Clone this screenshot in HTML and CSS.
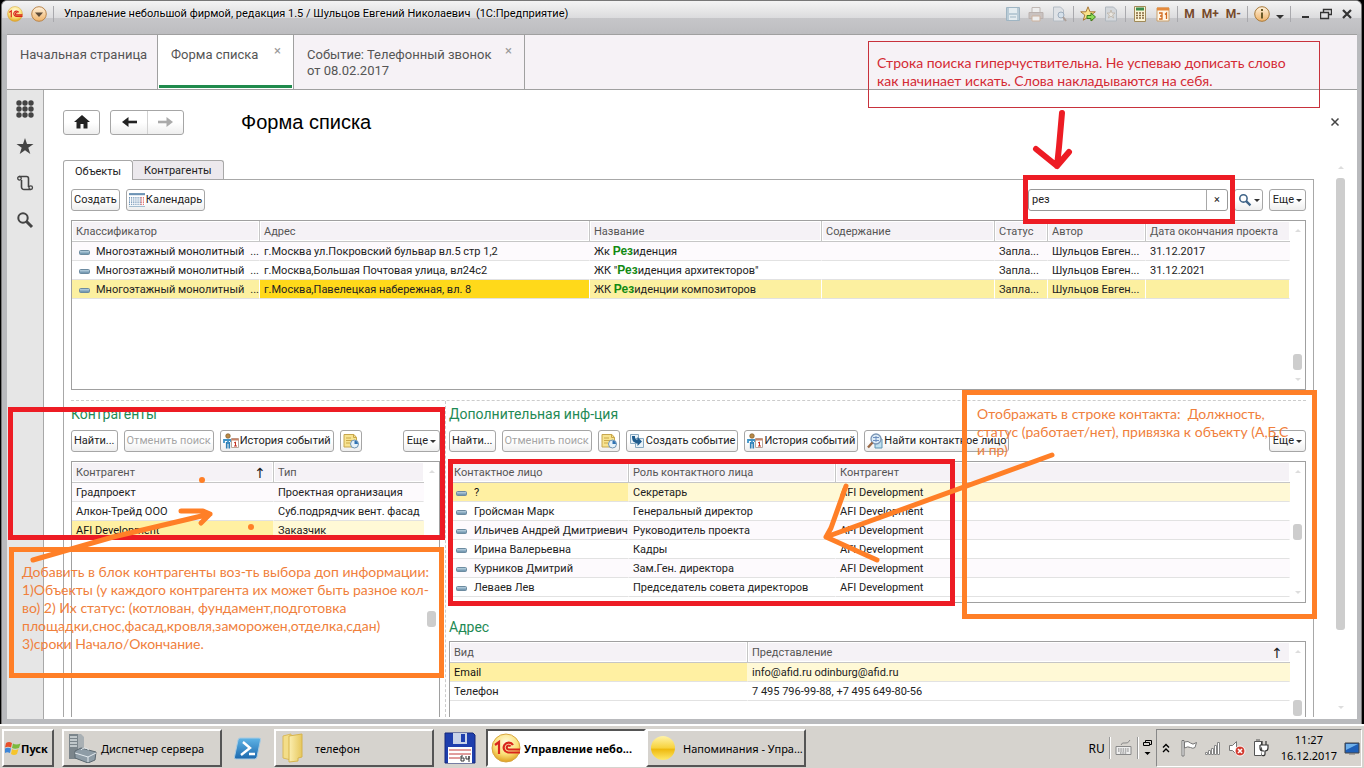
FILE: index.html
```html
<!DOCTYPE html>
<html lang="ru">
<head>
<meta charset="utf-8">
<title>Управление небольшой фирмой</title>
<link rel="stylesheet" href="styles.css">
</head>
<body>
<svg class="sprite" aria-hidden="true">
  <defs>
    <radialGradient id="gold" cx=".5" cy=".3" r=".7"><stop offset="0" stop-color="#fffbe0"/><stop offset=".6" stop-color="#fbe27a"/><stop offset="1" stop-color="#e0a020"/></radialGradient>
    <linearGradient id="ball" x1="0" y1="0" x2="0" y2="1"><stop offset="0" stop-color="#fff3a8"/><stop offset=".5" stop-color="#f7d23c"/><stop offset=".55" stop-color="#eeb90d"/><stop offset="1" stop-color="#ffe96a"/></linearGradient>
    <linearGradient id="steel" x1="0" y1="0" x2="0" y2="1"><stop offset="0" stop-color="#c5dbe8"/><stop offset="1" stop-color="#5f87a3"/></linearGradient>
    <linearGradient id="peach" x1="0" y1="0" x2="0" y2="1"><stop offset="0" stop-color="#fff2dc"/><stop offset="1" stop-color="#efb268"/></linearGradient>
    <linearGradient id="blue" x1="0" y1="0" x2="0" y2="1"><stop offset="0" stop-color="#5fb4e6"/><stop offset="1" stop-color="#1c68ad"/></linearGradient>
    <linearGradient id="folder" x1="0" y1="0" x2="1" y2="0"><stop offset="0" stop-color="#fbeeb0"/><stop offset="1" stop-color="#e6c75c"/></linearGradient>
  </defs>
  <symbol id="i-1c" viewBox="0 0 30 30"><circle cx="15" cy="15" r="14" fill="url(#gold)" stroke="#d8a640"/><path d="M4 12l4-3v12M22 12a5 5 0 1 0-5 7.500h12M19.500 13.500a2 2 0 1 0-2 3H29" fill="none" stroke="#d8261c" stroke-width="2.200"/></symbol>
  <symbol id="i-dash" viewBox="0 0 11 5"><rect x=".5" y=".5" width="10" height="4" rx="1" fill="url(#steel)" stroke="#6c8ba0"/></symbol>
  <symbol id="i-cal" viewBox="0 0 15 13"><path fill="#fff" d="M0 0h15v13H0z"/><path d="M0 1h15" stroke="#6d93b5" stroke-width="2"/><path d="M0 4.5h11M0 6.500h11M0 8.500h11M0 10.500h11" stroke="#3f6f9c" stroke-dasharray="1 1"/><path d="M11 4.500h4M11 6.500h4M11 8.500h4M11 10.500h4" stroke="#d84040" stroke-dasharray="1 1"/><path d="M0 12.500h15" stroke="#9db8cc"/></symbol>
  <symbol id="i-hist" viewBox="0 0 16 16"><circle cx="5" cy="3" r="2.300" fill="#b98a48" stroke="#76501e" stroke-width=".6"/><path d="M1 10V7h7v2M5 7v4" stroke="#3f93c8" stroke-width="1.800" fill="none"/><path d="M3.700 9v6.500M6.300 9v6.500" stroke="#2e7fb5" stroke-width="1.600"/><path d="M8.500 5.500h7v9h-7z" fill="#fff" stroke="#b8a79c"/><path d="M8.500 6.500h7" stroke="#c98468" stroke-width="2"/><path d="M11 10l1.500-1v4M11 13h3" stroke="#c33020" fill="none"/></symbol>
  <symbol id="i-note" viewBox="0 0 16 16"><path d="M1 1.500h10l2.500 3V14H1z" fill="#f7e391" stroke="#c6a64e"/><path d="M10.500 1.500v3h3M3 5h5M3 7.500h6M3 10h4" stroke="#cba848" fill="none"/><circle cx="11.500" cy="11" r="4" fill="#e6f2fa" stroke="#6f94b3"/><path d="M11.500 8v3h3.500a4 4 0 0 0-3.500-3.500z" fill="#2f72b3"/></symbol>
  <symbol id="i-event" viewBox="0 0 16 16"><path d="M1.500 1.500h8v9h-8zM6.500 5.500h8v9h-8z" fill="#e9f2f8" stroke="#87a8c0"/><path d="M3 3h3c0 3 .5 3.500 2.500 3.500V4L13 8.500 8.500 13v-3C4.500 10 3 8 3 3z" fill="#1f5c8e"/></symbol>
  <symbol id="i-find" viewBox="0 0 16 16"><path d="M8 6h7v9H8z" fill="#bfe0ee" stroke="#5f95b3"/><circle cx="9" cy="6" r="5" fill="#dcebf6" stroke="#7a95b5" stroke-width="1.300"/><path d="M6 4.500h6M6 7.500h6M9 3v6" stroke="#6c8fc0"/><path d="M5.500 9.500L1 14.500" stroke="#9a6a48" stroke-width="2.400"/></symbol>
  <symbol id="i-lens" viewBox="0 0 18 18"><circle cx="7" cy="7" r="4.700" fill="none" stroke="currentColor" stroke-width="2"/><path d="M10.500 10.500l5.500 5.500" stroke="currentColor" stroke-width="3"/></symbol>
  <symbol id="i-disk" viewBox="0 0 16 16"><path d="M1.500 1.500h13v13h-13z" fill="#b9cbd6" stroke="#9fb5c3"/><path d="M4 2h8v5H4zM4 9h8v5H4z" fill="#e4ecf0"/><path d="M5 11h6" stroke="#9fb5c3"/></symbol>
  <symbol id="i-print" viewBox="0 0 16 16"><path d="M4 1.500h8v5H4z" fill="#eee" stroke="#c0b8b4"/><path d="M1 6.500h14v6H1z" fill="#c9c2c0" stroke="#bab1ae"/><path d="M4 10h8v5H4z" fill="#eee" stroke="#ccb29f"/></symbol>
  <symbol id="i-preview" viewBox="0 0 16 16"><path d="M2.500 1h7l3 3v11h-10z" fill="#dfe2e6" stroke="#b4bcc4"/><circle cx="10" cy="9" r="3" fill="#d5e0ea" stroke="#9dacbc"/><path d="M12 11l3 4" stroke="#ada099" stroke-width="2"/></symbol>
  <symbol id="i-star" viewBox="0 0 16 16"><path d="M8 .8l2 5h5.300L11.200 9l1.500 5.200L8 11.300 3.300 14.200 4.800 9 .7 5.800H6z" fill="#fbe28a" stroke="#a8783a"/><path d="M7 9.500h4V7l4.500 4L11 15v-2.500H7z" fill="#8fdc55" stroke="#3c7d1f"/></symbol>
  <symbol id="i-starpage" viewBox="0 0 16 16"><path d="M2.500 1h8l3 3v11h-11z" fill="#d4d8dc" stroke="#b0b7be"/><path d="M8 4l1 3h3L9.600 9l1 3L8 10.200 5.400 12l1-3L4 7h3z" fill="#e9e6e0" stroke="#bdb4a8" stroke-width=".8"/></symbol>
  <symbol id="i-calc" viewBox="0 0 14 16"><path d="M1.500.5h11v15h-11z" fill="#fbf3d4" stroke="#a08a58"/><path d="M3 3h8" stroke="#3c8c4c" stroke-width="3"/><path d="M3 7h8M3 9.500h8M3 12h8" stroke="#87693f" stroke-width="1.500" stroke-dasharray="2 1"/></symbol>
  <symbol id="i-day" viewBox="0 0 14 16"><path d="M1 2h12v13H1z" fill="#fff6e6" stroke="#caa06c"/><path d="M1 3h12" stroke="#e58a3c" stroke-width="3"/><path d="M3 7h3v3H4h2v3H3M9 8.500L10.500 7v6" stroke="#d2691e" fill="none" stroke-width="1.300"/></symbol>
</svg>

<div class="window">
  <header class="titlebar">
    <button class="plain" aria-label="Главное меню"><svg class="ic16"><use href="#i-1c"/></svg></button>
    <button class="plain drop" aria-label="Меню"><svg class="ic16" viewBox="0 0 16 16"><circle cx="8" cy="8" r="7.300" fill="url(#peach)" stroke="#b9854c"/><path d="M4 6.500h8L8 11z" fill="#5c4a38"/></svg></button>
    <span class="vsep"></span>
    <h1 class="apptitle">Управление небольшой фирмой, редакция 1.5 / Шульцов Евгений Николаевич&nbsp; (1С:Предприятие)</h1>
    <div class="tools">
      <button class="plain" aria-label="Сохранить"><svg class="ic16"><use href="#i-disk"/></svg></button>
      <button class="plain" aria-label="Печать"><svg class="ic16"><use href="#i-print"/></svg></button>
      <button class="plain" aria-label="Просмотр"><svg class="ic16"><use href="#i-preview"/></svg></button>
      <span class="vsep"></span>
      <button class="plain" aria-label="В избранное"><svg class="ic16"><use href="#i-star"/></svg></button>
      <button class="plain" aria-label="Избранное"><svg class="ic16"><use href="#i-starpage"/></svg></button>
      <span class="vsep"></span>
      <button class="plain" aria-label="Калькулятор"><svg class="ic16"><use href="#i-calc"/></svg></button>
      <button class="plain" aria-label="Календарь"><svg class="ic16"><use href="#i-day"/></svg></button>
      <span class="vsep"></span>
      <button class="plain mem">M</button>
      <button class="plain mem">M+</button>
      <button class="plain mem">M-</button>
      <span class="vsep"></span>
      <button class="plain info" aria-label="Информация"><svg class="ic16" viewBox="0 0 16 16"><circle cx="8" cy="8" r="7.300" fill="url(#peach)" stroke="#a87a3a"/><path d="M8 3v2M8 6.500v6" stroke="#6a5a28" stroke-width="2"/></svg><svg class="car" viewBox="0 0 8 4"><path d="M0 0h8L4 4z" fill="#333"/></svg></button>
      <span class="vsep"></span>
      <button class="plain wctl" aria-label="Свернуть"><svg class="ic12" viewBox="0 0 12 12"><path d="M3 9h7" stroke="#333" stroke-width="2"/></svg></button>
      <button class="plain wctl" aria-label="Восстановить"><svg class="ic12" viewBox="0 0 12 12"><path d="M3.500 4V1.500h8v5H9M.5 4.500h8v6h-8z" fill="none" stroke="#333" stroke-width="1.400"/></svg></button>
      <button class="plain wctl" aria-label="Закрыть"><svg class="ic12" viewBox="0 0 12 12"><path d="M2 2l8 8M10 2l-8 8" stroke="#333" stroke-width="2.200"/></svg></button>
    </div>
  </header>

  <nav class="tabs">
    <a class="tab home" href="#">Начальная страница</a>
    <a class="tab form active" href="#"><span>Форма списка</span><i>×</i></a>
    <a class="tab event" href="#"><span>Событие: Телефонный звонок<br>от 08.02.2017</span><i>×</i></a>
  </nav>

  <div class="body">
    <aside class="sidebar">
      <button class="plain" aria-label="Разделы"><svg class="ic18" viewBox="0 0 18 18" fill="#444"><circle cx="3" cy="3" r="2.700"/><circle cx="9" cy="3" r="2.700"/><circle cx="15" cy="3" r="2.700"/><circle cx="3" cy="9" r="2.700"/><circle cx="9" cy="9" r="2.700"/><circle cx="15" cy="9" r="2.700"/><circle cx="3" cy="15" r="2.700"/><circle cx="9" cy="15" r="2.700"/><circle cx="15" cy="15" r="2.700"/></svg></button>
      <button class="plain" aria-label="Избранное"><svg class="ic18" viewBox="0 0 18 18"><path d="M9 1l2 6h6.500l-5.200 3.800L14.300 17 9 13.200 3.700 17l2-6.200L.5 7H7z" fill="#444"/></svg></button>
      <button class="plain" aria-label="История"><svg class="ic18" viewBox="0 0 18 18"><path d="M3 2.500h7.500a2 2 0 0 1 2 2V13M5.500 6V13a2.500 2.500 0 0 0 2.500 2.500h6.500" fill="none" stroke="#444" stroke-width="1.600"/><circle cx="3.500" cy="4.300" r="1.800" fill="none" stroke="#444" stroke-width="1.300"/><circle cx="14.700" cy="13.700" r="1.800" fill="none" stroke="#444" stroke-width="1.300"/></svg></button>
      <button class="plain" aria-label="Поиск"><svg class="ic18"><use href="#i-lens"/></svg></button>
    </aside>

    <main class="content">
      <div class="formhead">
        <button class="btn nav" aria-label="Домой"><svg class="ic18" viewBox="0 0 18 18"><path d="M9 2l8 7h-2.500v6.500h-4V11h-3v4.500h-4V9H1z" fill="#222"/></svg></button>
        <div class="navpair">
          <button aria-label="Назад"><svg class="ic18" viewBox="0 0 18 18"><path d="M17 9H6" stroke="#222" stroke-width="2.600"/><path d="M2 9l6.500-5v10z" fill="#222"/></svg></button>
          <button aria-label="Вперед"><svg class="ic18" viewBox="0 0 18 18"><path d="M1 9h11" stroke="#aaa" stroke-width="2.600"/><path d="M16 9L9.500 4v10z" fill="#aaa"/></svg></button>
        </div>
        <h2>Форма списка</h2>
        <button class="plain closeform" aria-label="Закрыть форму"><svg class="ic12" viewBox="0 0 12 12"><path d="M2.500 2.500l7 7M9.500 2.500l-7 7" stroke="#444" stroke-width="1.500"/></svg></button>
      </div>

      <div class="scrollarea">
        <div class="formcol">
          <div class="ptabs" role="tablist">
            <button class="ptab on" role="tab">Объекты</button><button class="ptab" role="tab">Контрагенты</button>
          </div>
          <section class="panel">
            <div class="bar">
              <button class="btn">Создать</button>
              <button class="btn"><svg class="ic16"><use href="#i-cal"/></svg>Календарь</button>
              <div class="search"><input type="text" value="рез" aria-label="Поиск"><button aria-label="Очистить">×</button></div>
              <button class="btn lens" aria-label="Найти"><svg class="ic14"><use href="#i-lens"/></svg><b class="caret"></b></button>
              <button class="btn more">Еще<b class="caret"></b></button>
            </div>

            <div class="grid objects">
              <table>
                <colgroup><col class="w187"><col class="w330"><col class="w232"><col class="w173"><col class="w53"><col class="w98"><col></colgroup>
                <thead><tr><th>Классификатор</th><th>Адрес</th><th>Название</th><th>Содержание</th><th>Статус</th><th>Автор</th><th>Дата окончания проекта</th></tr></thead>
                <tbody>
                  <tr><td><span class="cls"><svg class="dash"><use href="#i-dash"/></svg><span>Многоэтажный монолитный</span><span>...</span></span></td><td>г.Москва ул.Покровский бульвар вл.5 стр 1,2</td><td>Жк <mark>Рез</mark>иденция</td><td></td><td>Запла...</td><td>Шульцов Евген...</td><td>31.12.2017</td></tr>
                  <tr><td><span class="cls"><svg class="dash"><use href="#i-dash"/></svg><span>Многоэтажный монолитный</span><span>...</span></span></td><td>г.Москва,Большая Почтовая улица, вл24с2</td><td>ЖК "<mark>Рез</mark>иденция архитекторов"</td><td></td><td>Запла...</td><td>Шульцов Евген...</td><td>31.12.2021</td></tr>
                  <tr class="sel"><td><span class="cls"><svg class="dash"><use href="#i-dash"/></svg><span>Многоэтажный монолитный</span><span>...</span></span></td><td class="cur">г.Москва,Павелецкая набережная, вл. 8</td><td>ЖК <mark>Рез</mark>иденции композиторов</td><td></td><td>Запла...</td><td>Шульцов Евген...</td><td></td></tr>
                </tbody>
              </table>
              <div class="sbar"><i class="up"></i><i class="thumb"></i><i class="down"></i></div>
            </div>

            <div class="split">
              <section class="left">
                <h3>Контрагенты</h3>
                <div class="bar">
                  <button class="btn">Найти...</button>
                  <button class="btn" disabled>Отменить поиск</button>
                  <button class="btn"><svg class="ic16"><use href="#i-hist"/></svg>История событий</button>
                  <button class="btn sq" aria-label="Напоминание"><svg class="ic16"><use href="#i-note"/></svg></button>
                  <button class="btn more end">Еще<b class="caret"></b></button>
                </div>
                <div class="grid open">
                  <table>
                    <colgroup><col class="w201"><col></colgroup>
                    <thead><tr><th class="sorted">Контрагент<i>↑</i></th><th>Тип</th></tr></thead>
                    <tbody>
                      <tr><td>Градпроект</td><td>Проектная организация</td></tr>
                      <tr><td>Алкон-Трейд ООО</td><td>Суб.подрядчик вент. фасад</td></tr>
                      <tr class="pale"><td class="hot">AFI Development</td><td>Заказчик</td></tr>
                    </tbody>
                  </table>
                  <div class="sbar mid"><i class="up"></i><i class="thumb"></i></div>
                </div>
              </section>

              <section class="right">
                <h3>Дополнительная инф-ция</h3>
                <div class="bar">
                  <button class="btn">Найти...</button>
                  <button class="btn" disabled>Отменить поиск</button>
                  <button class="btn sq" aria-label="Напоминание"><svg class="ic16"><use href="#i-note"/></svg></button>
                  <button class="btn"><svg class="ic16"><use href="#i-event"/></svg>Создать событие</button>
                  <button class="btn"><svg class="ic16"><use href="#i-hist"/></svg>История событий</button>
                  <button class="btn"><svg class="ic16"><use href="#i-find"/></svg>Найти контактное лицо</button>
                  <button class="btn more end">Еще<b class="caret"></b></button>
                </div>
                <div class="grid contacts">
                  <table>
                    <colgroup><col class="w179"><col class="w207"><col></colgroup>
                    <thead><tr><th>Контактное лицо</th><th>Роль контактного лица</th><th>Контрагент</th></tr></thead>
                    <tbody>
                      <tr class="pale"><td class="hot"><span class="who"><svg class="dash"><use href="#i-dash"/></svg>?</span></td><td>Секретарь</td><td>AFI Development</td></tr>
                      <tr><td><span class="who"><svg class="dash"><use href="#i-dash"/></svg>Гройсман Марк</span></td><td>Генеральный директор</td><td>AFI Development</td></tr>
                      <tr><td><span class="who"><svg class="dash"><use href="#i-dash"/></svg>Ильичев Андрей Дмитриевич</span></td><td>Руководитель проекта</td><td>AFI Development</td></tr>
                      <tr><td><span class="who"><svg class="dash"><use href="#i-dash"/></svg>Ирина Валерьевна</span></td><td>Кадры</td><td>AFI Development</td></tr>
                      <tr><td><span class="who"><svg class="dash"><use href="#i-dash"/></svg>Курников Дмитрий</span></td><td>Зам.Ген. директора</td><td>AFI Development</td></tr>
                      <tr><td><span class="who"><svg class="dash"><use href="#i-dash"/></svg>Леваев Лев</span></td><td>Председатель совета директоров</td><td>AFI Development</td></tr>
                    </tbody>
                  </table>
                  <div class="sbar mid"><i class="up"></i><i class="thumb"></i><i class="down"></i></div>
                </div>
                <h3 class="addr">Адрес</h3>
                <div class="grid open">
                  <table>
                    <colgroup><col class="w298"><col></colgroup>
                    <thead><tr><th>Вид</th><th class="sorted">Представление<i>↑</i></th></tr></thead>
                    <tbody>
                      <tr class="pale"><td class="hot">Email</td><td>info@afid.ru odinburg@afid.ru</td></tr>
                      <tr><td>Телефон</td><td>7 495 796-99-88, +7 495 649-80-56</td></tr>
                    </tbody>
                  </table>
                  <div class="sbar"><i class="up"></i><i class="thumb"></i></div>
                </div>
              </section>
            </div>
          </section>
        </div>
        <div class="pagebar"><i class="up"></i><i class="thumb"></i><i class="down"></i></div>
      </div>
    </main>
  </div>
</div>

<footer class="taskbar">
  <button class="task start"><svg class="ic16" viewBox="0 0 16 16"><path d="M1 3q3-2 6 0L6 7.500Q3 6 0 7.500z" fill="#e8502a"/><path d="M8 3.500q3 2 7.500 0L14 8Q10 9.500 7 8z" fill="#7cba3c"/><path d="M0 8.500q3-1.500 6 0l-1 4.500Q2 11.500 0 13z" fill="#3d86d8"/><path d="M7 9q3 2 6.500 0L12 14Q9 16 6 14z" fill="#f6c52c"/></svg>Пуск</button>
  <button class="task wide server"><svg class="ic30" viewBox="0 0 30 30"><path d="M2 1h12l3 3v22H2z" fill="#a9b0b4"/><path d="M2 1h9v25H2z" fill="#7b858b"/><path d="M3 4h7M3 7h7M3 10h7M3 13h7" stroke="#d7dde0" stroke-width="1.500"/><path d="M8 18l6-3 15 4-1 8-7 3-13-5z" fill="#8e9ca6" stroke="#5c6870"/><path d="M8 20l13 4 8-4M21 24v5M14 17q3-4 8 0" fill="none" stroke="#e4eaee"/></svg>Диспетчер сервера</button>
  <button class="plain ps" aria-label="PowerShell"><svg class="ic28" viewBox="0 0 28 28"><path d="M6 4h19q2 0 1.500 2L23 23q-.5 2-2.500 2H2q-2 0-1.500-2L4 6q.5-2 2-2z" fill="url(#blue)" stroke="#a9cbe2"/><path d="M9 8l7 6-9 7M15 20h6" fill="none" stroke="#fff" stroke-width="2.400"/></svg></button>
  <button class="task wide folder"><svg class="ic30" viewBox="0 0 30 30"><path d="M4 3l8-2v26l-8-2z" fill="#f3dd88" stroke="#d9b95a"/><path d="M10 3l13-2v23l-4 1v3l-9 1z" fill="url(#folder)" stroke="#d6b44c"/></svg>телефон</button>
  <button class="plain floppy" aria-label="Total Commander"><svg class="ic32" viewBox="0 0 32 32"><path d="M1 1h28l2 2v28H1z" fill="#1f3fae" stroke="#16297a"/><path d="M9 1h14v11H9z" fill="#c9d3e8"/><path d="M17 2h4v8h-4z" fill="#1f3fae"/><path d="M4 15h24v16H4z" fill="#fff"/><path d="M5 18h22M5 22h22M5 26h11" stroke="#c23a3a"/><path d="M19 24h-2v5h3v-3h-3M22 24v3h3v-3v6" stroke="#333" fill="none"/></svg></button>
  <button class="task wide on"><svg class="ic30"><use href="#i-1c"/></svg>Управление небо...</button>
  <button class="task wide remind"><svg class="ic26" viewBox="0 0 26 26"><circle cx="13" cy="13" r="12" fill="url(#ball)"/></svg>Напоминания - Упра...</button>
  <div class="lang">
    <span>RU</span><i class="tsep"></i>
    <svg class="ic18" viewBox="0 0 18 18"><path d="M1 7.500h15v8H1z" fill="#eee" stroke="#888"/><path d="M3 10h11M3 12h11M5 14h7" stroke="#777" stroke-dasharray="1.500 .8"/><path d="M6 6q1-3 4-2t5-3" fill="none" stroke="#888"/></svg>
    <i class="tsep"></i>
    <svg class="wm" viewBox="0 0 9 18"><path d="M2.500 3V1.500h6v4H7M.5 3.500h6v3h-6z" fill="none" stroke="#000"/><path d="M1.500 13h6l-3 3z"/></svg>
  </div>
  <div class="tray">
    <svg class="chev" viewBox="0 0 8 10"><path d="M1 4.500L4 1.500l3 3M1 9l3-3 3 3" fill="none" stroke="#000" stroke-width="1.400"/></svg>
    <svg class="ic18" viewBox="0 0 18 18"><path d="M2 1.500h2V17H2z" fill="#fff" stroke="#777"/><path d="M4.500 3q4-1.500 6 1t6-.5l-1.500 5q-2 1.500-4.500 0t-6 .5z" fill="#fff" stroke="#777"/></svg>
    <svg class="ic18" viewBox="0 0 18 18"><path d="M1.500 13.500h2v2h-2zM4.500 11.500h2v4h-2zM7.500 9.500h2v6h-2zM10.500 6.500h2v9h-2zM13.500 3.500h2v12h-2z" fill="#fff" stroke="#888"/></svg>
    <svg class="ic18" viewBox="0 0 18 18"><path d="M1.500 6.500h3l4-4v13l-4-4h-3z" fill="#fff" stroke="#777"/><circle cx="12" cy="12" r="5" fill="#d23b30" stroke="#fff"/><path d="M10 10l4 4M14 10l-4 4" stroke="#fff" stroke-width="1.600"/></svg>
    <svg class="ic18" viewBox="0 0 18 18"><path d="M2.500 2.500h7v14h-7zM4 1h4" fill="#fff" stroke="#555"/><path d="M10 2v4M14 2v4M8 6h8v3q0 3-3 3v3q0 2-3 1.500M8 6v3q0 3 3 3h1" fill="#fff" stroke="#333" stroke-width="1.200"/></svg>
    <time class="clock">11:27<br>16.12.2017</time>
    <svg class="ic16" viewBox="0 0 16 16"><path d="M1 3h14v10H1z" fill="#1e5fb8" stroke="#444"/><path d="M2 4h12L2 10z" fill="#6fb0ea"/><path d="M5 14h6" stroke="#777"/></svg>
  </div>
</footer>

<div class="notes">
  <div class="box red searchmark"></div>
  <div class="box red leftmark"></div>
  <div class="box red contactmark"></div>
  <p class="note redtext">Строка поиска гиперчуствительна. Не успеваю дописать слово<br>как начинает искать. Слова накладываются на себя.</p>
  <p class="box note orange n-contact">Отображать в строке контакта:&nbsp; Должность,<br>статус (работает/нет), привязка к объекту (А,Б,С<br>и пр)</p>
  <p class="box note orange n-left">Добавить в блок контрагенты воз-ть выбора доп информации:<br>1)Объекты (у каждого контрагента их может быть разное кол-<br>во) 2) Их статус: (котлован, фундамент,подготовка<br>площадки,снос,фасад,кровля,заморожен,отделка,сдан)<br>3)сроки Начало/Окончание.</p>
  <svg class="ink">
    <g fill="none" stroke="#ed1c24" stroke-width="6" stroke-linecap="round" stroke-linejoin="round"><path d="M1062 113l-3 34-2 19M1036 149l21 17 12-14"/></g>
    <g fill="none" stroke="#ff7f27" stroke-width="5" stroke-linecap="round" stroke-linejoin="round"><path d="M1052 455L826 537M846 486l-15 42-5 9 51 23"/><path d="M33 560l80-23 97-23M181 511h22l7 3-9 9"/></g>
    <circle cx="202" cy="480" r="3" fill="#ff7f27"/><circle cx="251" cy="527" r="3" fill="#ff7f27"/>
  </svg>
</div>
</body>
</html>
```
FILE: styles.css
```css
* { box-sizing: border-box; }
body {
  margin: 0;
  height: 100vh;
  display: flex;
  flex-direction: column;
  overflow: hidden;
  background: #000;
  color: #222;
  font: 11px/16px Roboto, "Liberation Sans", sans-serif;
}
button, input { font: inherit; color: inherit; margin: 0; }
h1, h2, h3, p { margin: 0; font-weight: normal; }
i { font-style: normal; }
svg { display: block; flex: none; }
.sprite { position: absolute; width: 0; height: 0; }
.ic12 { width: 12px; height: 12px; }
.ic14 { width: 14px; height: 14px; }
.ic16 { width: 16px; height: 16px; }
.ic18 { width: 18px; height: 18px; }
.ic26 { width: 26px; height: 26px; }
.ic28 { width: 28px; height: 28px; }
.ic30 { width: 30px; height: 30px; }
.ic32 { width: 32px; height: 32px; }
.plain { border: 0; padding: 0; background: none; display: flex; align-items: center; justify-content: center; }

/* window frame */
.window {
  flex: 1;
  min-height: 0;
  display: flex;
  flex-direction: column;
  margin: 0 2px 0 1px;
  padding: 0 4px 5px 5px;
  border: 1px solid #777;
  border-bottom: 0;
  border-radius: 6px 6px 0 0;
  background: #b9babd;
}
.titlebar {
  flex: none;
  height: 33px;
  margin: 0 -4px 0 -5px;
  padding: 0 8px 7px 5px;
  display: flex;
  align-items: center;
  background: linear-gradient(#f4f4f4, #dcdcde 50%, #c6c6c9 52%, #bdbdc0);
  border-radius: 5px 5px 0 0;
}
.drop { margin-left: 8px; }
.vsep { width: 1px; height: 16px; background: #a9a9ad; margin: 0 6px; }
.apptitle { flex: 1; margin-left: 4px; color: #000; font-size: 11px; white-space: nowrap; text-shadow: 0 0 2px #fff; }
.tools { display: flex; align-items: center; gap: 7px; }
.tools .vsep { margin: 0 -1px; }
.mem { color: #774a2c; font-size: 12px; font-weight: bold; }
.info { gap: 6px; }
.wctl { margin-left: 2px; }
.car { width: 8px; height: 4px; margin-top: 6px; }

/* open forms */
.tabs { flex: none; height: 56px; display: flex; background: #f6f2f6; border: 1px solid #a0a0a0; border-width: 1px 0; }
.tab {
  display: flex;
  justify-content: space-between;
  padding: 12px 12px 0 13px;
  border-right: 1px solid #a0a0a0;
  color: #555;
  font-size: 13px;
  text-decoration: none;
  white-space: nowrap;
}
.tab i { color: #999; line-height: 8px; }
.tab.home { width: 151px; }
.tab.form { width: 136px; }
.tab.event { width: 231px; }
.tab.active { background: linear-gradient(#1f8a4c, #1f8a4c) 1px 50px / calc(100% - 2px) 3px no-repeat #fff; }

.body { flex: 1; min-height: 0; display: flex; background: #fff; }
.sidebar {
  flex: none;
  width: 37px;
  padding-top: 10px;
  display: flex;
  flex-direction: column;
  align-items: center;
  gap: 19px;
  color: #444;
  background: #e6e6e6;
  border-right: 1px solid #a8a8a8;
}
.content { flex: 1; min-width: 0; display: flex; flex-direction: column; padding: 19px 12px 2px 19px; }

/* form heading */
.formhead { display: flex; align-items: center; height: 26px; flex: none; }
.formhead h2 { flex: 1; margin-left: 57px; color: #000; font: 20px/24px "Liberation Sans", sans-serif; }
.closeform { margin-right: 4px; }
.btn {
  height: 22px;
  padding: 0 2px;
  display: inline-flex;
  align-items: center;
  justify-content: center;
  gap: 1px;
  border: 1px solid #a6a6a6;
  border-radius: 3px;
  background: linear-gradient(#fff 50%, #eee);
  white-space: nowrap;
}
.btn:disabled { color: #a5a5a5; }
.btn.nav { width: 37px; height: 25px; }
.navpair { display: flex; margin-left: 10px; height: 25px; border: 1px solid #a6a6a6; border-radius: 3px; background: linear-gradient(#fff 50%, #eee); }
.navpair button { width: 36px; padding: 0; border: 0; background: none; display: flex; align-items: center; justify-content: center; }
.navpair button + button { border-left: 1px solid #d2d2d2; }
.caret { width: 0; height: 0; margin: 1px 0 0; border: 3px solid transparent; border-top: 3px solid #333; border-bottom: 0; }
.btn.sq { width: 22px; padding: 0; }
.btn.more { width: 37px; gap: 2px; }
.btn.end { margin-left: auto; }
.btn.lens { width: 29px; gap: 2px; color: #3f6488; }

.scrollarea { flex: 1; min-height: 0; display: flex; margin-top: 25px; }
.formcol { flex: 1; min-width: 0; display: flex; flex-direction: column; }
.pagebar { flex: none; width: 9px; margin-left: 22px; display: flex; flex-direction: column; align-items: center; padding: 6px 0 8px; }
.pagebar .thumb { flex: 1; width: 9px; margin: 9px 0 76px; background: #cdcdcd; border-radius: 3px; }

.ptabs { display: flex; flex: none; height: 19px; }
.ptab {
  padding: 2px 11px 0;
  border: 1px solid #a8a8a8;
  border-bottom: 0;
  border-left-width: 0;
  border-radius: 0 3px 0 0;
  background: #ece9ed;
}
.ptab.on { height: 20px; z-index: 1; background: #fff; border-left-width: 1px; border-radius: 3px 3px 0 0; }
.panel { flex: 1; min-height: 0; display: flex; flex-direction: column; padding: 9px 7px 0; border: 1px solid #a8a8a8; border-bottom: 0; }
.bar { flex: none; display: flex; gap: 6px; height: 22px; }
.search { display: flex; width: 200px; margin-left: auto; border: 1px solid #999; border-radius: 3px; background: #fff; }
.search input { flex: 1; min-width: 0; border: 0; padding: 0 3px; background: none; outline: 0; }
.search button { width: 21px; border: 0; border-left: 1px solid #a8a8a8; padding: 0; background: none; }

/* lists */
.grid { display: flex; border: 1px solid #a0a0a0; background: #fff; min-height: 0; }
.grid table { flex: 1; width: 100%; min-width: 0; align-self: flex-start; table-layout: fixed; border-collapse: separate; border-spacing: 0; }
.grid th { height: 21px; padding: 2px 4px 0; text-align: left; white-space: nowrap; font-weight: normal; color: #555; background: #f5f2f6; border: 1px solid #c6c6c6; border-width: 0 1px 1px 0; box-shadow: inset 0 0 0 1px #fff; }
.grid th:last-child { border-right: 0; }
.grid td { height: 19px; padding: 2px 4px 0; border-bottom: 1px solid #e2e2e2; white-space: nowrap; overflow: hidden; line-height: 16px; border-right: 1px solid transparent; background-clip: padding-box; }
.grid tbody tr:nth-child(odd) { background: #fdfafd; }
.grid tbody tr.sel { background: #fff; }
.sel td { background-color: #fcf0a0; }
.grid .sel .cur { background-color: #ffd91a; color: #222; }
.grid tbody tr.pale { background: #fff9d6; }
.grid .pale .hot { background-color: #fff0a2; color: #111; }
.sorted { display: flex; justify-content: space-between; align-items: center; }
.sorted i { font: 14px/16px "DejaVu Sans", sans-serif; padding-right: 3px; color: #222; }
mark { background: none; color: #128a12; font: bold 12px/12px "Liberation Sans", sans-serif; }
.dash { width: 11px; height: 5px; }
.cls, .who { display: flex; align-items: center; gap: 7px; }
.cls { padding-left: 3px; gap: 6px; }
.who { padding-left: 2px; }
.cls span:last-child { margin-left: auto; }
.w187 { width: 188px; } .w330 { width: 330px; } .w232 { width: 232px; } .w173 { width: 173px; }
.w53 { width: 53px; } .w98 { width: 98px; } .w201 { width: 202px; } .w179 { width: 179px; }
.w207 { width: 207px; } .w298 { width: 298px; }

.sbar { flex: none; width: 15px; display: flex; flex-direction: column; align-items: center; padding: 8px 0; }
.up, .down { width: 0; height: 0; border: 3px solid transparent; }
.up { border-top: 0; border-bottom-color: #ddd; }
.down { border-bottom: 0; border-top-color: #ddd; }
.sbar .thumb { width: 9px; height: 16px; margin-top: auto; background: #cdcdcd; border-radius: 3px; }
.sbar .down { margin-top: 8px; }
.mid .thumb { margin: auto 0; }
.mid .down { margin: 0; }
.sbar .thumb:last-child { margin-bottom: -7px; }
.mid .thumb:last-child { margin-bottom: 82px; margin-top: auto; }

.objects { flex: none; height: 170px; margin-top: 9px; }
.split { flex: 1; min-height: 0; display: flex; margin-top: 10px; border-top: 1px dashed #ccc; }
.left { flex: none; width: 375px; padding-right: 5px; display: flex; flex-direction: column; border-right: 1px dashed #ccc; }
.right { flex: 1; min-width: 0; padding-left: 3px; display: flex; flex-direction: column; }
h3 { flex: none; margin: 3px 0 6px; color: #1f8a55; font-size: 14px; line-height: 20px; }
.split .grid { margin-top: 9px; }
.contacts { flex: none; height: 142px; }
h3.addr { margin: 14px 0 4px; }
.split .addr + .grid { margin-top: 0; }
.open { flex: 1; border-bottom: 0; }

/* taskbar */
.taskbar {
  flex: none;
  height: 44px;
  display: flex;
  align-items: center;
  padding: 2px 2px 0;
  border-top: 2px solid #fff;
  background: #d6d3ce;
  color: #000;
  font: 11px/15px "Noto Sans", sans-serif;
}
.task {
  display: flex;
  align-items: center;
  height: 38px;
  padding: 0 4px;
  border: 2px solid;
  border-color: #fff #555 #555 #fff;
  background: #d6d3ce;
  white-space: nowrap;
}
.task.wide { width: 160px; gap: 3px; padding: 0 3px; }
.task.start { width: 52px; padding: 0 1px; font-weight: bold; }
.task.server { margin-left: 8px; gap: 4px; }
.ps { margin-left: 12px; }
.folder.folder { margin-left: 12px; gap: 6px; }
.floppy { margin: 0 10px; }
.task.on { border-color: #555 #fff #fff #555; background: #fff; font-weight: bold; }
.task.remind { padding: 0 2px; gap: 7px; }
.lang { margin-left: auto; display: flex; align-items: center; gap: 4px; font-size: 12px; }
.tsep { width: 2px; height: 22px; border-left: 1px solid #999; background: #fff; }
.wm { width: 9px; height: 18px; }
.tray { display: flex; align-items: center; gap: 6px; height: 38px; margin-left: 4px; padding: 0 1px 0 5px; border: 1px solid; border-color: #888 #fff #fff #888; }
.chev { width: 8px; height: 10px; margin-right: 4px; }
.clock { margin: 0 1px 0 5px; text-align: center; line-height: 16px; }

/* reviewer marks drawn over the screen */
.notes { position: absolute; inset: 0; pointer-events: none; overflow: hidden; }
.notes > * { position: absolute; }
.box { border: 5px solid; }
.red { border-color: #ed1c24; }
.note { font: 14px/18px Lato, "Open Sans", sans-serif; white-space: nowrap; }
.orange { border-color: #ff7f27; color: #f0803c; }
.redtext { left: 868px; top: 41px; width: 452px; height: 67px; padding: 12px 8px; border: 1px solid #c8323c; color: #d42a34; }
.searchmark { left: 1023px; top: 175px; width: 212px; height: 49px; }
.leftmark { left: 8px; top: 407px; width: 437px; height: 133px; }
.contactmark { left: 448px; top: 459px; width: 507px; height: 147px; }
.n-contact { left: 962px; top: 390px; width: 355px; height: 229px; padding: 10px; }
.n-left { left: 9px; top: 547px; width: 435px; height: 131px; padding: 11px 8px; }
.ink { inset: 0; width: 100%; height: 100%; }
```
